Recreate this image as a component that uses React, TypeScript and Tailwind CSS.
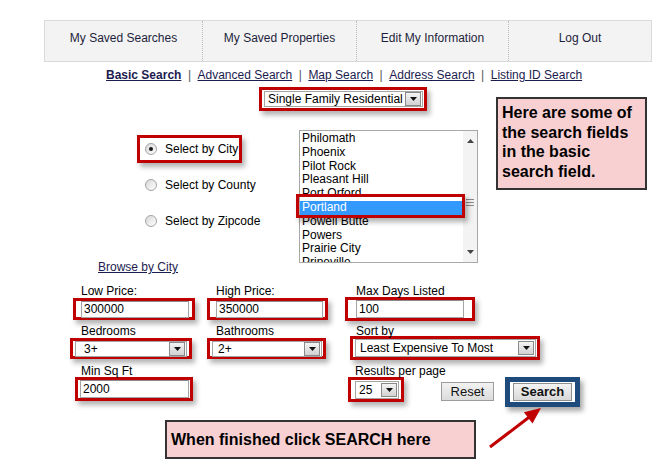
import type { ReactNode } from 'react';

const font = "font-['Liberation_Sans',Arial,sans-serif]";

const cities = [
  'Philomath',
  'Phoenix',
  'Pilot Rock',
  'Pleasant Hill',
  'Port Orford',
  'Portland',
  'Powell Butte',
  'Powers',
  'Prairie City',
  'Prineville',
];

function Red({ children, className }: { children: ReactNode; className: string }) {
  return (
    <div
      className={`border-[3px] border-[#c00000] shadow-[3px_4px_5px_rgba(0,0,0,0.3)] ${className}`}
    >
      {children}
    </div>
  );
}

function Arrow() {
  return (
    <span className="ml-[2px] flex h-[14px] w-[16px] shrink-0 items-center justify-center border border-[#8a8a8a] bg-gradient-to-b from-[#f4f4f4] to-[#d2d2d2]">
      <svg width="7" height="4" viewBox="0 0 7 4">
        <path d="M0 0h7L3.5 4z" fill="#111" />
      </svg>
    </span>
  );
}

function Select({ value, className }: { value: string; className: string }) {
  return (
    <div
      className={`flex items-center border border-[#a5a5a5] bg-white pl-[3px] pr-[1px] ${className}`}
    >
      <span className="flex-1 whitespace-nowrap leading-[14px]">{value}</span>
      <Arrow />
    </div>
  );
}

function Input({ value, className }: { value: string; className: string }) {
  return (
    <div
      className={`flex items-center border border-[#a5a5a5] border-t-[#8c8c8c] bg-white pl-[2px] leading-[14px] ${className}`}
    >
      {value}
    </div>
  );
}

function Radio({ checked }: { checked?: boolean }) {
  return (
    <span className="flex h-[12px] w-[12px] items-center justify-center rounded-full border border-[#a3a3a3] bg-gradient-to-br from-[#d8d8d8] to-white">
      {checked && <span className="h-[4px] w-[4px] rounded-full bg-[#1a1a1a]" />}
    </span>
  );
}

export default function App() {
  return (
    <div className={`relative h-[470px] w-[666px] overflow-hidden bg-white text-[12px] text-black ${font}`}>
      {/* top menu */}
      <div className="ml-[44px] mt-[20px] flex h-[42px] w-[608px] border border-[#dadada] bg-[#f3f3f3] text-[#1e1e3c]">
        <div className="w-[158px] border-r border-dotted border-[#bdbdbd] pt-[8px] text-center">My Saved Searches</div>
        <div className="w-[154px] border-r border-dotted border-[#bdbdbd] pt-[8px] text-center">My Saved Properties</div>
        <div className="w-[152px] border-r border-dotted border-[#bdbdbd] pt-[8px] text-center">Edit My Information</div>
        <div className="flex-1 pt-[8px] text-center">Log Out</div>
      </div>

      {/* search tabs */}
      <div className="ml-[106px] mt-[7px] flex h-[13px] items-center leading-[13px] text-[#1c1c50]">
        <span className="font-bold underline">Basic Search</span>
        <span className="mx-[6.5px] text-[#555]">|</span>
        <span className="underline">Advanced Search</span>
        <span className="mx-[6.5px] text-[#555]">|</span>
        <span className="underline">Map Search</span>
        <span className="mx-[6.5px] text-[#555]">|</span>
        <span className="underline">Address Search</span>
        <span className="mx-[6.5px] text-[#555]">|</span>
        <span className="underline">Listing ID Search</span>
      </div>

      {/* property type */}
      <Red className="ml-[259px] mt-[5px] flex h-[24px] w-[168px] items-center pl-[2px]">
        <Select value="Single Family Residential" className="h-[16px] w-[159px]" />
      </Red>

      {/* city selection */}
      <div className="mt-[19px] flex">
        <div className="ml-[137px] w-[162px]">
          <Red className="mt-[5px] flex h-[28px] w-[105px] items-center gap-[8px] pl-[5px]">
            <Radio checked />
            <span>Select by City</span>
          </Red>
          <div className="mt-[15px] flex h-[14px] items-center gap-[8px] pl-[8px]">
            <Radio />
            <span>Select by County</span>
          </div>
          <div className="mt-[22px] flex h-[14px] items-center gap-[8px] pl-[8px]">
            <Radio />
            <span>Select by Zipcode</span>
          </div>
        </div>
        <div className="relative h-[133px] w-[179px]">
          <div className="flex h-full w-full overflow-hidden border border-[#a8a8a8] bg-white">
            <div className="mt-[1px] flex-1">
              {cities.map((c) => (
                <div
                  key={c}
                  className={`h-[13.8px] pl-[2px] leading-[13.8px] ${c === 'Portland' ? 'bg-[#3399ff] text-white' : ''}`}
                >
                  {c}
                </div>
              ))}
            </div>
            <div className="flex w-[14px] flex-col items-center justify-between bg-[#f3f3f3] py-[8px]">
              <svg width="7" height="4" viewBox="0 0 7 4">
                <path d="M0 4h7L3.5 0z" fill="#444" />
              </svg>
              <div className="mt-[56px] flex flex-col gap-[2px]">
                <span className="h-px w-[8px] bg-[#8a8a8a]" />
                <span className="h-px w-[8px] bg-[#8a8a8a]" />
                <span className="h-px w-[8px] bg-[#8a8a8a]" />
              </div>
              <svg className="mt-auto" width="7" height="4" viewBox="0 0 7 4">
                <path d="M0 0h7L3.5 4z" fill="#444" />
              </svg>
            </div>
          </div>
          <Red className="absolute left-[-3px] top-[64px] h-[24px] w-[169px]">
            <span />
          </Red>
        </div>
      </div>

      <div className="-mt-[2px] ml-[98px] leading-[13px] text-[#1c1c50] underline">Browse by City</div>

      {/* row 1 */}
      <div className="mt-[11px] flex h-[40px] items-start">
        <div className="ml-[73px] w-[134px]">
          <div className="pl-[8px] leading-[13px]">Low Price:</div>
          <Red className="flex h-[22px] w-[122px] items-center pl-[5px]">
            <Input value="300000" className="h-[17px] w-[108px]" />
          </Red>
        </div>
        <div className="w-[138px]">
          <div className="pl-[9px] leading-[13px]">High Price:</div>
          <Red className="flex h-[22px] w-[121px] items-center pl-[6px]">
            <Input value="350000" className="h-[17px] w-[107px]" />
          </Red>
        </div>
        <div>
          <div className="pl-[11px] leading-[13px]">Max Days Listed</div>
          <Red className="-mt-[1px] flex h-[24px] w-[130px] items-center pl-[8px]">
            <Input value="100" className="h-[18px] w-[108px]" />
          </Red>
        </div>
      </div>

      {/* row 2 */}
      <div className="flex h-[40px] items-start">
        <div className="ml-[70px] w-[137px]">
          <div className="pl-[11px] leading-[13px]">Bedrooms</div>
          <Red className="flex h-[21px] w-[122px] items-center pl-[2px]">
            <Select value="3+" className="h-[16px] w-[112px] pl-[8px]" />
          </Red>
        </div>
        <div className="w-[143px]">
          <div className="pl-[9px] leading-[13px]">Bathrooms</div>
          <Red className="flex h-[21px] w-[119px] items-center pl-[2px]">
            <Select value="2+" className="h-[16px] w-[110px] pl-[5px]" />
          </Red>
        </div>
        <div>
          <div className="pl-[6px] leading-[13px]">Sort by</div>
          <Red className="-mt-[2px] flex h-[24px] w-[190px] items-center pl-[2px]">
            <Select value="Least Expensive To Most" className="h-[18px] w-[181px] pl-[4px]" />
          </Red>
        </div>
      </div>

      {/* row 3 */}
      <div className="flex h-[42px] items-start">
        <div className="ml-[75px] w-[273px]">
          <div className="pl-[6px] leading-[13px]">Min Sq Ft</div>
          <Red className="-mt-[1px] flex h-[24px] w-[118px] items-center pl-[2px]">
            <Input value="2000" className="h-[18px] w-[109px]" />
          </Red>
        </div>
        <div className="w-[93px]">
          <div className="whitespace-nowrap pl-[7px] leading-[13px]">Results per page</div>
          <Red className="-mt-[1px] flex h-[25px] w-[56px] items-center pl-[4px]">
            <Select value="25" className="h-[18px] w-[44px] pl-[2px]" />
          </Red>
        </div>
        <button className="mt-[17px] h-[19px] w-[53px] border border-[#9c9c9c] bg-gradient-to-b from-[#f2f2f2] to-[#dcdcdc] text-[13px] leading-[17px] text-[#111]">
          Reset
        </button>
        <div className="ml-[11px] mt-[12px] flex h-[30px] w-[75px] items-center justify-center border-[5px] border-[#1f4a7c] shadow-[3px_4px_5px_rgba(0,0,0,0.35)]">
          <button className="h-[18px] w-[59px] border border-[#8f8f8f] bg-gradient-to-b from-[#f4f4f4] to-[#d8d8d8] text-[13px] font-bold leading-[16px] text-[#111]">
            Search
          </button>
        </div>
      </div>

      {/* bottom note */}
      <div className="ml-[165px] mt-[13px] flex h-[39px] w-[311px] items-center border-2 border-[#333] bg-[#f9d0d2] pl-[4px] text-[16px] font-bold">
        When finished click SEARCH here
      </div>

      {/* side note */}
      <div className="absolute left-[496px] top-[97px] h-[93px] w-[151px] border-2 border-[#333] bg-[#f9d0d2] pl-[4px] pt-[4px] text-[16px] font-bold leading-[19.5px]">
        Here are some of
        <br />
        the search fields
        <br />
        in the basic
        <br />
        search field.
      </div>

      {/* pointer arrow */}
      <svg className="absolute left-0 top-0" width="666" height="470" viewBox="0 0 666 470">
        <line x1="490" y1="447" x2="530" y2="416.5" stroke="#c00000" strokeWidth="3" />
        <path d="M541 408L532.5 423.4L523.9 412.2z" fill="#c00000" />
      </svg>
    </div>
  );
}
